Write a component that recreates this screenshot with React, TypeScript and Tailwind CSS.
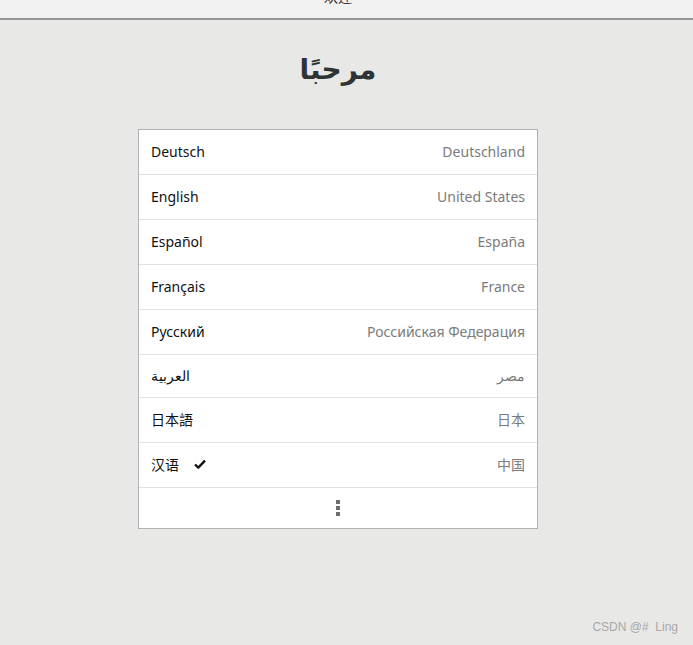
import React from 'react';

const languages = [
  { name: 'Deutsch', region: 'Deutschland', h: 'h-[45px]' },
  { name: 'English', region: 'United States', h: 'h-[45px]' },
  { name: 'Español', region: 'España', h: 'h-[45px]' },
  { name: 'Français', region: 'France', h: 'h-[45px]' },
  { name: 'Русский', region: 'Российская Федерация', h: 'h-[45px]' },
  { name: 'العربية', region: 'مصر', h: 'h-[43px]' },
  { name: '日本語', region: '日本', h: 'h-[45px]' },
  { name: '汉语', region: '中国', h: 'h-[45px]', selected: true },
];

export default function App() {
  return (
    <div className="w-[693px] h-[645px] bg-[#e8e8e7] flex flex-col font-['Noto_Sans','Noto_Sans_CJK_SC',sans-serif] overflow-hidden relative">
      {/* Header bar, title mostly scrolled out at the top */}
      <div className="h-[20px] bg-[#f2f2f2] border-b-2 border-[#979797] pr-[17px] flex justify-center shrink-0 overflow-hidden">
        <span className="text-[14px] leading-none text-[#2e3436] -mt-[10px]">欢迎</span>
      </div>

      <div className="flex flex-col pr-[17px]">
        <h1 className="mt-[31px] text-center text-[28px] leading-[38px] font-bold text-[#2e3436] font-['DejaVu_Sans',sans-serif]">
          مرحبًا
        </h1>

        <div className="mt-[40px] mx-auto w-[400px] bg-white border border-[#b3b3b3]">
          {languages.map((l) => (
            <div
              key={l.name}
              className={`${l.h} flex items-center justify-between px-[12px] pb-[2px] border-b border-[#e2e2e2] text-[14px]`}
            >
              <div className="flex items-center gap-[15px] text-[#111]">
                <span>{l.name}</span>
                {l.selected && (
                  <svg width="12" height="10" viewBox="0 0 12 10">
                    <path d="M1 5.5 L4.3 8.6 L11 1.6" fill="none" stroke="#111" strokeWidth="2.4" strokeLinejoin="round" />
                  </svg>
                )}
              </div>
              <span className="text-[#7b7b7b]">{l.region}</span>
            </div>
          ))}
          <div className="h-[40px] flex items-center justify-center">
            <div className="flex flex-col gap-[2px]">
              <span className="w-[4px] h-[4px] bg-[#6e6e6e]" />
              <span className="w-[4px] h-[4px] bg-[#6e6e6e]" />
              <span className="w-[4px] h-[4px] bg-[#6e6e6e]" />
            </div>
          </div>
        </div>
      </div>

      <div className="absolute right-[15px] bottom-[9px] text-[12px] text-[#a8a8a8] font-['Liberation_Sans',sans-serif]">
        CSDN @#&nbsp;&nbsp;Ling
      </div>
    </div>
  );
}
